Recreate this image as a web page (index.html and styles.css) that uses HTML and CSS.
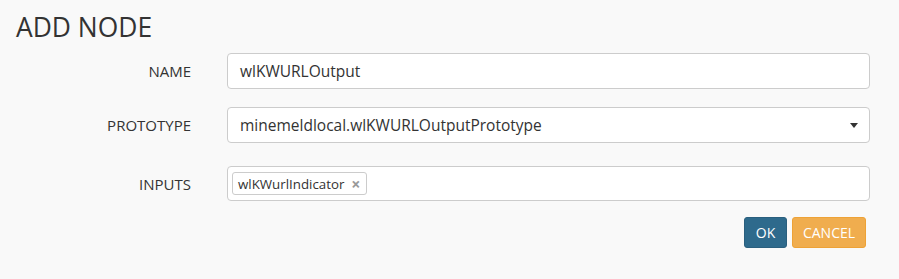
FILE: index.html
```html
<!DOCTYPE html>
<html>
<head>
<meta charset="utf-8">
<link rel="stylesheet" href="styles.css">
</head>
<body>
<div class="modal">
  <h1 class="title">ADD NODE</h1>
  <form class="form">
    <div class="row">
      <label class="label">NAME</label>
      <div class="control"><div class="input">wlKWURLOutput</div></div>
    </div>
    <div class="row">
      <label class="label">PROTOTYPE</label>
      <div class="control"><div class="input select">minemeldlocal.wlKWURLOutputPrototype<span class="caret"></span></div></div>
    </div>
    <div class="row row-inputs">
      <label class="label">INPUTS</label>
      <div class="control"><div class="input tags"><span class="tag">wlKWurlIndicator<span class="tag-x">×</span></span></div></div>
    </div>
    <div class="actions">
      <button type="button" class="btn btn-ok">OK</button>
      <button type="button" class="btn btn-cancel">CANCEL</button>
    </div>
  </form>
</div>
</body>
</html>
```
FILE: styles.css
```css
html, body {
  margin: 0;
  padding: 0;
  background: #f9f9f9;
}
body {
  font-family: "Open Sans", "Liberation Sans", sans-serif;
  color: #333;
  width: 899px;
  height: 279px;
  overflow: hidden;
}
.modal {
  padding: 10px 29px 0 16px;
}
.title {
  margin: 0;
  font-size: 26.4px;
  font-weight: 400;
  line-height: 34px;
  color: #333;
}
.form {
  margin-top: 9px;
  display: flex;
  flex-direction: column;
  gap: 18px;
}
.row {
  display: flex;
  align-items: center;
}
.label {
  width: 175px;
  text-align: right;
  font-size: 15px;
  color: #333;
  padding-right: 36px;
}
.control {
  flex: 1;
}
.input {
  box-sizing: border-box;
  height: 36px;
  background: #fff;
  border: 1px solid #ccc;
  border-radius: 4px;
  padding: 0 12px;
  font-size: 15.5px;
  line-height: 34px;
  color: #333;
  position: relative;
}
.select .caret {
  position: absolute;
  right: 11px;
  top: 15px;
  width: 0;
  height: 0;
  border-left: 4px solid transparent;
  border-right: 4px solid transparent;
  border-top: 5px solid #333;
}
.row-inputs {
  margin-top: 5px;
}
.tags {
  height: 35px;
  padding: 0 4px;
  display: flex;
  align-items: center;
}
.tag {
  box-sizing: border-box;
  height: 23px;
  display: inline-flex;
  align-items: center;
  border: 1px solid #ccc;
  border-radius: 3px;
  padding: 0 6px 0 5px;
  font-size: 13.3px;
  color: #333;
  background: #fff;
}
.tag-x {
  margin-left: 7px;
  color: #999;
  font-size: 16px;
  font-weight: 700;
  line-height: 1;
}
.actions {
  display: flex;
  justify-content: flex-end;
  gap: 5px;
  margin-top: -2px;
  padding-right: 4px;
}
.btn {
  height: 31px;
  border: 1px solid transparent;
  border-radius: 3px;
  font-family: "Open Sans", "Liberation Sans", sans-serif;
  font-size: 14px;
  color: #fff;
  padding: 0;
  cursor: pointer;
}
.btn-ok {
  background: #2e6a8c;
  border-color: #2a5f7e;
  width: 43px;
}
.btn-cancel {
  background: #f0ad4e;
  border-color: #eea236;
  width: 74px;
}
```
